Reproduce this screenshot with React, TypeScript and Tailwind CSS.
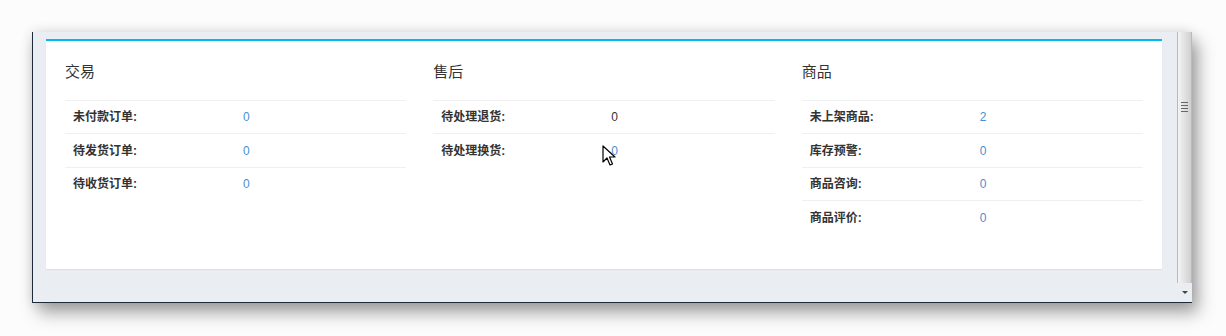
import React from "react";

type Row = { label: string; value: string; dark?: boolean };

const sections: { title: string; rows: Row[] }[] = [
  {
    title: "交易",
    rows: [
      { label: "未付款订单:", value: "0" },
      { label: "待发货订单:", value: "0" },
      { label: "待收货订单:", value: "0" },
    ],
  },
  {
    title: "售后",
    rows: [
      { label: "待处理退货:", value: "0", dark: true },
      { label: "待处理换货:", value: "0" },
    ],
  },
  {
    title: "商品",
    rows: [
      { label: "未上架商品:", value: "2" },
      { label: "库存预警:", value: "0" },
      { label: "商品咨询:", value: "0" },
      { label: "商品评价:", value: "0" },
    ],
  },
];

function Section({ title, rows }: { title: string; rows: Row[] }) {
  return (
    <div className="flex flex-col">
      <div className="h-[59px] pt-[21px] text-[15px] leading-[20px] text-[#333]">
        {title}
      </div>
      <div className="border-t border-[#f0f0f0]">
        {rows.map((r) => (
          <div
            key={r.label}
            className="flex h-[33.4px] items-center border-b border-[#f0f0f0] pl-[8px] text-[12px] last:border-b-0"
          >
            <span className="w-[170px] font-bold text-[#333]">{r.label}</span>
            <span className={r.dark ? "text-[#333]" : "text-[#4a8fd0]"}>
              {r.value}
            </span>
          </div>
        ))}
      </div>
    </div>
  );
}

function Cursor() {
  return (
    <svg
      className="absolute left-[602px] top-[145px]"
      width="14"
      height="22"
      viewBox="0 0 14 22"
    >
      <path
        d="M1 1 L1 17 L5 13 L8 20 L10.5 19 L7.5 12 L13 12 Z"
        fill="#fff"
        stroke="#000"
        strokeWidth="1.2"
        strokeLinejoin="round"
      />
    </svg>
  );
}

export default function App() {
  return (
    <div
      className="relative h-[336px] w-[1226px] overflow-hidden bg-[#fcfcfc] pl-[32px] pt-[32px]"
      style={{ fontFamily: '"Liberation Sans", "Noto Sans CJK SC", sans-serif' }}
    >
      <div className="flex h-[271px] w-[1160px] border-b border-l border-[#1e2a38] shadow-[6px_10px_16px_rgba(0,0,0,0.35),0_0_12px_rgba(0,0,0,0.12)]">
        <div className="flex-1 bg-[#eaedf2] pl-[13px] pr-[15px] pt-[7px]">
          <div className="h-[230px] border-t-2 border-[#00b9ee] bg-white px-[19px] shadow-[0_1px_1px_rgba(0,0,0,0.06)]">
            <div className="grid grid-cols-3 gap-[27px]">
              {sections.map((s) => (
                <Section key={s.title} title={s.title} rows={s.rows} />
              ))}
            </div>
          </div>
        </div>
        <div className="flex w-[15px] flex-col bg-[#eaedf2]">
          <div className="flex flex-1 items-start justify-center border-x border-[#b9b9b9] bg-gradient-to-r from-[#f4f4f4] via-[#e2e2e2] to-[#cfcfcf] pt-[70px]">
            <div className="flex flex-col gap-[2px]">
              <div className="h-px w-[7px] bg-[#666]" />
              <div className="h-px w-[7px] bg-[#666]" />
              <div className="h-px w-[7px] bg-[#666]" />
              <div className="h-px w-[7px] bg-[#666]" />
            </div>
          </div>
          <div className="flex h-[19px] items-center justify-center">
            <div className="h-0 w-0 border-x-[3px] border-t-[3px] border-x-transparent border-t-[#444]" />
          </div>
        </div>
      </div>
      <Cursor />
    </div>
  );
}
